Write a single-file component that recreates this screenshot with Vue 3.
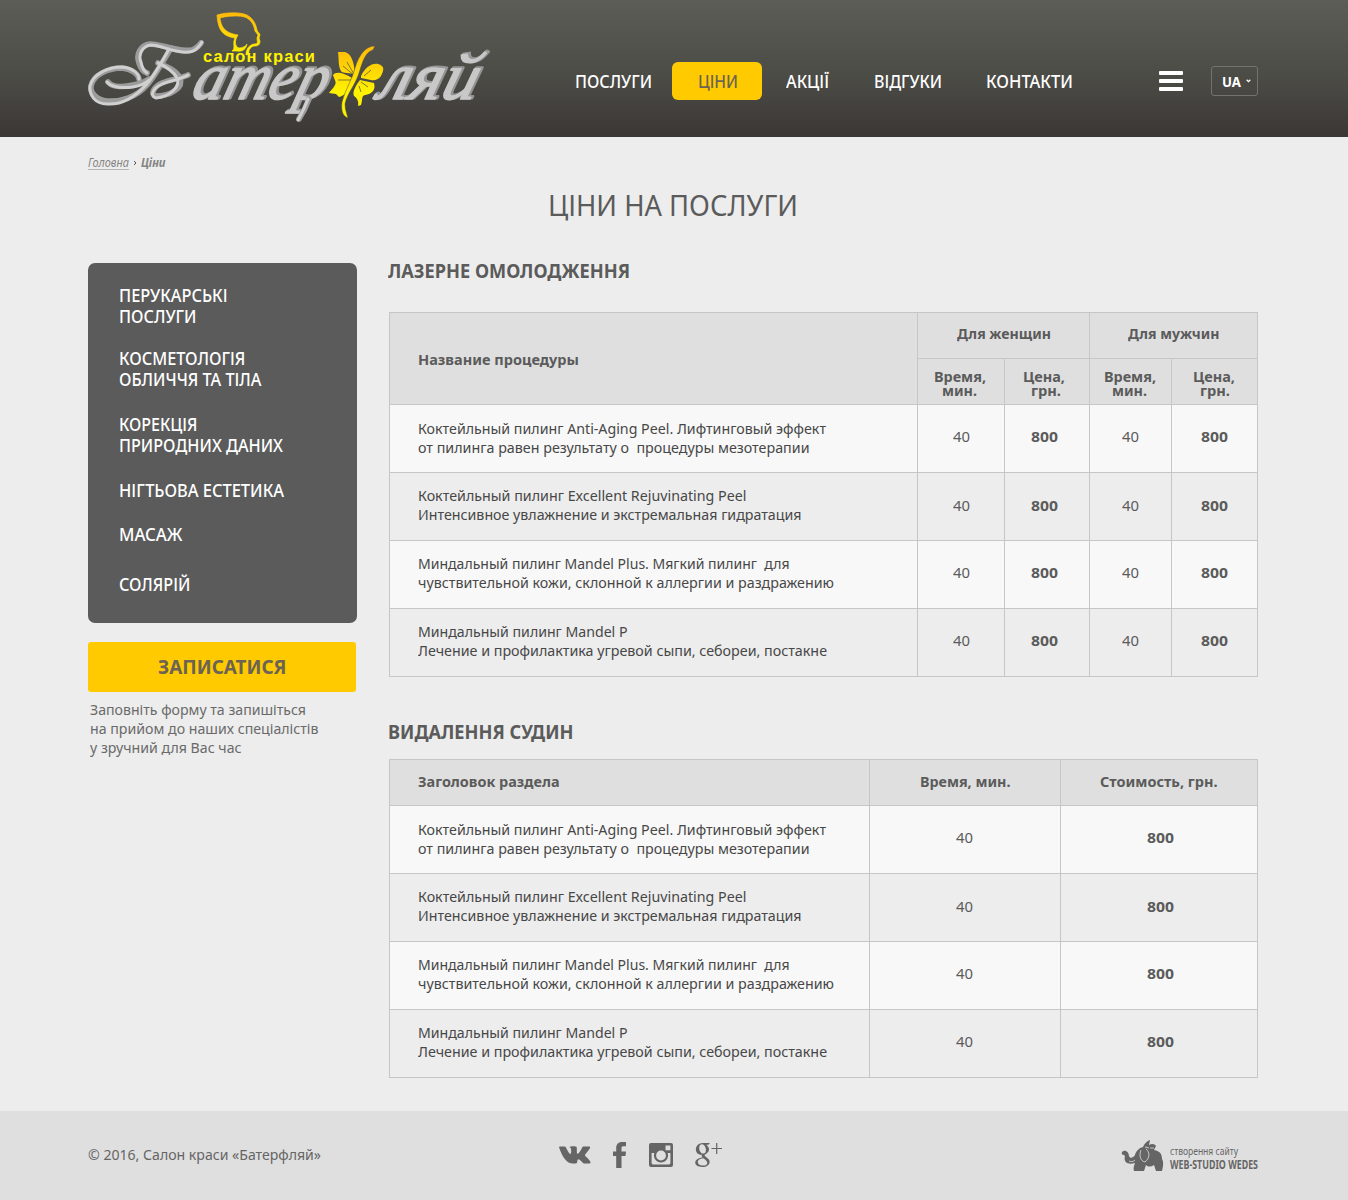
<script setup>
const nav = [
  { label: 'ПОСЛУГИ', w: 77 },
  { label: 'ЦІНИ', w: 40, active: true },
  { label: 'АКЦІЇ', w: 43 },
  { label: 'ВІДГУКИ', w: 68 },
  { label: 'КОНТАКТИ', w: 87 },
]

const categories = [
  { lines: [['ПЕРУКАРСЬКІ', 108.5], ['ПОСЛУГИ', 77.5]], space: 21 },
  { lines: [['КОСМЕТОЛОГІЯ', 126.5], ['ОБЛИЧЧЯ ТА ТІЛА', 142.5]], space: 24 },
  { lines: [['КОРЕКЦІЯ', 78.5], ['ПРИРОДНИХ ДАНИХ', 164]], space: 24 },
  { lines: [['НІГТЬОВА ЕСТЕТИКА', 165]], space: 23 },
  { lines: [['МАСАЖ', 63.5]], space: 29 },
  { lines: [['СОЛЯРІЙ', 71.5]], space: 0 },
]

const note = [
  ['Заповніть форму та запишіться', 216],
  ['на прийом до наших спеціалістів', 228.5],
  ['у зручний для Вас час', 151.5],
]

const procedures = [
  [['Коктейльный пилинг Anti-Aging Peel. Лифтинговый эффект', 408], ['от пилинга равен результату о \u00a0процедуры мезотерапии', 391.5]],
  [['Коктейльный пилинг Excellent Rejuvinating Peel', 328.5], ['Интенсивное увлажнение и экстремальная гидратация', 383.5]],
  [['Миндальный пилинг Mandel Plus. Мягкий пилинг \u00a0для', 371.5], ['чувствительной кожи, склонной к аллергии и раздражению', 416]],
  [['Миндальный пилинг Mandel P', 209.5], ['Лечение и профилактика угревой сыпи, себореи, постакне', 409]],
]

const vFit = {
  mounted(el, { value }) {
    const natural = el.getBoundingClientRect().width
    el.style.width = `${value}px`
    el.style.transform = `scaleX(${value / natural})`
  },
}
</script>

<template>
  <div class="page">
    <header class="header">
      <a class="logo">
        <svg width="410" height="128" viewBox="80 0 410 128">
          <defs>
            <linearGradient id="gold" x1="0" y1="0" x2="0" y2="1">
              <stop offset="0" stop-color="#ffb80a" />
              <stop offset="1" stop-color="#fff200" />
            </linearGradient>
            <linearGradient id="wing" gradientUnits="userSpaceOnUse" x1="0" y1="46" x2="0" y2="112">
              <stop offset="0" stop-color="#ffb80a" />
              <stop offset=".7" stop-color="#fff200" />
            </linearGradient>
          </defs>
          <g class="swash">
            <g class="back">
              <path d="M201 43 C195 51 190 51 182 50 C170 49 160 44 150 44 C140 45 136 55 139 63 C141 69 144 72 147 73" />
              <path d="M171 48 C164 60 156 74 148 84 C136 98 120 102 107 101 C97 100 90 93 91 86 C93 75 108 68 122 68 C132 69 138 74 139 79" />
              <path d="M108 82 C113 88 125 87 133 85 C139 84 145 82 149 79" />
              <path d="M158 63 C166 66 176 70 180 78 C184 88 170 96 156 96 C150 95 153 87 162 83 C172 79 182 78 188 75" />
            </g>
            <g class="front">
              <path d="M202 42 C196 52 190 53 182 52 C170 51 160 45 151 45 C142 46 138 55 141 62 C142 68 144 71 147 73" />
              <path d="M169 49 C162 62 154 76 146 85 C134 98 120 105 107 104 C95 104 89 95 90 86 C93 74 108 67 122 67 C132 68 139 73 139 79" />
              <path d="M107 82 C112 88 125 88 133 87 C139 86 145 84 149 80" />
              <path d="M158 63 C165 66 173 71 177 78 C181 88 168 97 156 98 C149 96 153 88 162 84 C172 80 182 79 188 75" />
            </g>
          </g>
          <g class="script">
            <text class="shade" transform="translate(192 98) skewX(-16)" textLength="134" lengthAdjust="spacingAndGlyphs">атер</text>
            <text class="shine" transform="translate(190 99) skewX(-16)" textLength="134" lengthAdjust="spacingAndGlyphs">атер</text>
            <text class="shade" transform="translate(378 98) skewX(-16)" textLength="98" lengthAdjust="spacingAndGlyphs">ляй</text>
            <text class="shine" transform="translate(376 99) skewX(-16)" textLength="98" lengthAdjust="spacingAndGlyphs">ляй</text>
            <path class="tail back" d="M309 99 C306 107 303 113 299 119" />
            <path class="tail front" d="M308 99 C305 107 302 113 298 120" />
          </g>
          <path stroke="url(#gold)" stroke-width=".7" fill="url(#gold)" d="M217 15 C227 12 240 12 247 15 C254 19 256 25 257 30 C258 33 260 33 260 35 L259 38 L260 41 C260 45 258 46 254 46 C250 47 248 51 249 54 L246 55 C246 49 249 45 254 44 C259 44 257 41 257 38 L258 35 L255 31 C253 20 247 16 237 16 C229 16 223 17 220 18 C221 26 224 33 238 35 C234 41 235 47 239 48 C243 48 246 46 247 44 C246 49 243 52 237 51 L232 51 C236 49 232 43 235 38 C221 36 218 28 217 15 Z" />
          <text class="tagline" x="203" y="62" textLength="112" lengthAdjust="spacing">салон краси</text>
          <g fill="url(#wing)">
            <path d="M338 52 L345 52 C351 54 354 60 355 75 C350 72 343 74 341 71 C338 66 339 58 338 52 Z" />
            <path d="M352 78 C344 73 336 71 333 75 C334 79 337 82 335 85 C333 89 330 91 329 93 L336 94 L339 97 C344 96 349 91 353 81 Z" />
            <path d="M361 76 C365 68 371 63 378 64 C385 66 384 70 381 76 C378 80 374 81 371 80 L361 78 Z" />
            <path d="M360 80 L374 83 C376 90 372 94 365 95 C361 96 363 99 361 105 L358 106 C359 101 357 98 354 96 C352 92 356 85 360 80 Z" />
          </g>
          <path class="wings" d="M347 62 L355 76 M343 66 L355 76 M338 80 L352 80 M364 76 L371 70 M361 82 L368 87 M359 86 L361 92" />
          <path fill="url(#wing)" stroke="#4b4a45" stroke-width=".5" d="M375 46 L373 50 C366 52 363 60 360 70 C356 85 347 93 345 104 C345 110 347 114 348 118 C342 116 341 109 342 102 C345 90 352 80 355 68 C359 54 366 46 375 46 Z" />
        </svg>
      </a>
      <nav class="nav">
        <a v-for="n in nav" :key="n.label" class="nav-link" :class="{ active: n.active }"><span v-fit="n.w" class="fit">{{ n.label }}</span></a>
      </nav>
      <div class="burger"><i></i><i></i><i></i></div>
      <div class="lang">
        <span v-fit="19" class="fit">UA</span>
        <svg width="5" height="4" viewBox="0 0 5 4"><path d="M.7 .8 L2.5 2.6 L4.3 .8" fill="none" stroke="#fff" stroke-width="1.3" /></svg>
      </div>
    </header>

    <main class="main">
      <div class="crumbs">
        <a><span v-fit="41" class="fit">Головна</span></a>
        <svg width="4" height="6" viewBox="0 0 4 6"><path d="M1 1 L3 3 L1 5" fill="none" stroke="#555" /></svg>
        <b><span v-fit="24.5" class="fit">Ціни</span></b>
      </div>
      <h1><span v-fit="250" class="fit">ЦІНИ НА ПОСЛУГИ</span></h1>

      <div class="columns">
        <aside class="aside">
          <ul class="menu">
            <li v-for="(c, i) in categories" :key="i" :style="{ marginBottom: c.space + 'px' }">
              <div v-for="l in c.lines" :key="l[0]"><span v-fit="l[1]" class="fit">{{ l[0] }}</span></div>
            </li>
          </ul>
          <button class="signup"><span v-fit="128.5" class="fit">ЗАПИСАТИСЯ</span></button>
          <div class="note">
            <div v-for="l in note" :key="l[0]"><span v-fit="l[1]" class="fit">{{ l[0] }}</span></div>
          </div>
        </aside>

        <div class="content">
          <h2><span v-fit="242" class="fit">ЛАЗЕРНЕ ОМОЛОДЖЕННЯ</span></h2>
          <div class="table five">
            <div class="th name tall"><span v-fit="161" class="fit">Название процедуры</span></div>
            <div class="th wide"><span v-fit="94" class="fit">Для женщин</span></div>
            <div class="th wide men"><span v-fit="91.5" class="fit">Для мужчин</span></div>
            <template v-for="g in 2" :key="g">
              <div class="th sub" :class="{ late: g === 2 }"><span v-fit="52" class="fit">Время,</span><span v-fit="35" class="fit">мин.</span></div>
              <div class="th sub price-head" :class="{ late: g === 2 }"><span v-fit="42" class="fit">Цена,</span><span v-fit="30" class="fit unit">грн.</span></div>
            </template>
            <template v-for="(p, i) in procedures" :key="i">
              <div class="td" :class="{ light: i % 2 === 0, first: i === 0 }">
                <div v-for="l in p" :key="l[0]"><span v-fit="l[1]" class="fit">{{ l[0] }}</span></div>
              </div>
              <template v-for="g in 2" :key="g">
                <div class="num" :class="{ light: i % 2 === 0, low: i === 1 }"><span v-fit="17" class="fit">40</span></div>
                <div class="num price" :class="{ light: i % 2 === 0, low: i === 1, left: g === 1 }"><span v-fit="27" class="fit">800</span></div>
              </template>
            </template>
          </div>

          <h2 class="second"><span v-fit="185.5" class="fit">ВИДАЛЕННЯ СУДИН</span></h2>
          <div class="table three">
            <div class="th name"><span v-fit="141.5" class="fit">Заголовок раздела</span></div>
            <div class="th"><span v-fit="90.5" class="fit">Время, мин.</span></div>
            <div class="th cost"><span v-fit="117.5" class="fit">Стоимость, грн.</span></div>
            <template v-for="(p, i) in procedures" :key="i">
              <div class="td" :class="{ light: i % 2 === 0, first: i === 0 }">
                <div v-for="l in p" :key="l[0]"><span v-fit="l[1]" class="fit">{{ l[0] }}</span></div>
              </div>
              <div class="num nudge" :class="{ light: i % 2 === 0, low: i === 1 }"><span v-fit="17" class="fit">40</span></div>
              <div class="num price right" :class="{ light: i % 2 === 0, low: i === 1 }"><span v-fit="27" class="fit">800</span></div>
            </template>
          </div>
        </div>
      </div>
    </main>

    <footer class="footer">
      <div class="copy"><span v-fit="233" class="fit">© 2016, Салон краси «Батерфляй»</span></div>
      <div class="social">
        <svg width="32" height="18" viewBox="0 0 32 18"><path d="M0 1.2 Q0 .5 1 .5 H5.5 Q6.5 .5 7 1.6 C8.4 4.9 10 7.6 11.3 8 C12.4 8.2 12.4 3.2 11.8 2.2 C11.5 1.5 10.4 1.4 10.4 1.1 C11.2 0 17 -.2 17.6 1 C18.2 2.2 17.3 7.2 18.4 7.8 C19.7 7.8 22 4 23 1.7 Q23.4 .5 24.5 .5 H30 C32.9 .5 29.9 4 26.4 8.2 C25.6 9.3 26 9.8 27.4 11.1 C31.2 14.8 33.2 17.5 29.8 17.5 H25.6 C23.7 17.5 21.4 13.6 19.4 13.2 C17.8 13.2 18.8 17.5 17 17.5 H14 C7.5 17.5 3.4 11 0 1.2 Z" /></svg>
        <svg width="14" height="26" viewBox="0 0 14 26"><path d="M3.2 26 V14 H0 V9.5 H3.2 V6 C3.2 2.2 5.4 0 9 0 H13 V4.3 H10.2 C9 4.3 8.5 5 8.5 6.2 V9.5 H13 L12.5 14 H8.5 V26 Z" /></svg>
        <svg width="26" height="26" viewBox="0 0 26 26"><path fill-rule="evenodd" d="M3 1 H23 Q25 1 25 3 V23 Q25 25 23 25 H3 Q1 25 1 23 V3 Q1 1 3 1 Z M17.5 3.6 V8.2 H22.4 V3.6 Z M3.6 11 V21 Q3.6 22.4 5 22.4 H21 Q22.4 22.4 22.4 21 V11 H19.7 A7.1 7.1 0 1 1 6.3 11 Z M13 8.6 A4.9 4.9 0 1 0 13 18.4 A4.9 4.9 0 1 0 13 8.6 Z" /></svg>
        <svg class="gplus" width="28" height="30" viewBox="0 0 28 30"><path fill-rule="evenodd" d="M15 2 L13.4 3.7 H11.3 C15.5 7 14.5 11 10.6 13.2 C8.4 14.4 10 15.3 12 16.7 C17.3 20.4 14 26 7.3 26 C2 26 -1 23 .7 19.8 C1.9 17.5 4.8 16.6 7.5 16.4 C6.6 15.5 6.5 14.7 6.9 13.8 C-1.6 14.4 -1 2 8 2 Z M7 3.2 C2.5 3.2 3.8 12.6 8.4 12.6 C12.8 12.4 11 3.2 7 3.2 Z M8.3 17.3 C1 17.5 1 24.5 7.8 24.6 C13 24.6 14.2 20.8 8.3 17.3 Z" /><path d="M16.5 7.5 H27 M21.7 2 V13" fill="none" stroke="#656565" stroke-width="1.2" /></svg>
      </div>
      <svg class="studio" width="142" height="38" viewBox="0 0 142 38">
        <path d="M1 13 C4 10 8 13 8 17 C9 20 12 19 14 16 C15 12 18 9 22 8 C23 5 26 2 29 1 L28 6 C31 4 34 5 35 7 L33 11 C39 12 41 15 41 20 C43 23 42 28 41 32 H35 L33 26 C30 28 27 28 25 26 L23 32 H13 C12 29 13 27 14 24 C8 26 2 24 4 17 C3 15 0 17 1 13 Z" />
        <path d="M20 11 C18 16 19 22 24 23 C29 19 29 13 25 10 M14 21 C12 23 10 23 8 22 M24 8 L28 9 M29 9 L33 9" fill="none" stroke="#dfdfdf" stroke-width=".8" />
        <text class="thin" x="49" y="16" textLength="68" lengthAdjust="spacingAndGlyphs">створення сайту</text>
        <text class="bold" x="49" y="30" textLength="88" lengthAdjust="spacingAndGlyphs">WEB-STUDIO WEDES</text>
      </svg>
    </footer>
  </div>
</template>

<style>
body {
  margin: 0;
  background: #ededed;
}
</style>

<style scoped>
.page {
  box-sizing: border-box;
  width: 1348px;
  height: 1200px;
  display: flex;
  flex-direction: column;
  background: #ededed;
  color: #5b5b5b;
  font-family: 'Noto Sans', 'Open Sans', sans-serif;
}
.fit {
  display: inline-block;
  white-space: nowrap;
  text-align: left;
  transform-origin: 0 50%;
}
.header {
  height: 137px;
  flex: none;
  display: flex;
  align-items: flex-start;
  background: linear-gradient(#5d5d57, #4c4c47 55%, #3b3734);
}
.logo {
  margin-left: 80px;
  width: 410px;
}
.logo svg {
  display: block;
}
.swash path,
.tail {
  fill: none;
  stroke-linecap: round;
}
.swash .back,
.tail.back {
  stroke: #9c9c9c;
  stroke-width: 5.6;
}
.swash .front,
.tail.front {
  stroke: #d0d0d0;
  stroke-width: 3;
}
.script {
  font: italic 66px 'Liberation Serif', serif;
  stroke-linejoin: round;
}
.shade {
  fill: #959595;
  stroke: #959595;
  stroke-width: 3;
}
.shine {
  fill: #c8c8c8;
  stroke: #c8c8c8;
  stroke-width: 1.4;
}
.tagline {
  font: bold 16.5px 'Liberation Sans', sans-serif;
  fill: #fff200;
}
.wings {
  fill: none;
  stroke: #4b4a45;
  stroke-width: 0.7;
}
.nav {
  display: flex;
  margin: 62px 0 0 85px;
  width: 584px;
}
.nav-link {
  height: 38px;
  line-height: 39px;
  font-size: 17.3px;
  font-weight: 500;
  color: #fff;
  margin-right: 44.5px;
}
.nav-link:first-child {
  margin-right: 20px;
}
.nav-link.active {
  box-sizing: border-box;
  width: 90px;
  padding-left: 26px;
  margin-right: 24px;
  border-radius: 6px;
  background: #ffcb00;
  color: #6b6353;
}
.burger {
  width: 24px;
  height: 20px;
  margin-top: 71px;
  display: flex;
  flex-direction: column;
  justify-content: space-between;
}
.burger i {
  height: 4px;
  border-radius: 1px;
  background: #fff;
}
.lang {
  box-sizing: border-box;
  width: 47px;
  height: 30px;
  margin: 66px 0 0 28px;
  padding: 1px 0 0 10px;
  display: flex;
  align-items: center;
  gap: 5px;
  border: 1px solid #73736e;
  border-radius: 3px;
  color: #fff;
  font-size: 14px;
  font-weight: 700;
}
.lang svg {
  margin-top: -1px;
}
.main {
  height: 974px;
  padding: 0 90px 0 88px;
}
.crumbs {
  display: flex;
  align-items: center;
  gap: 4px;
  height: 17px;
  padding-top: 17px;
  font-size: 11.8px;
  line-height: 13px;
  font-style: italic;
  color: #858585;
}
.crumbs a {
  border-bottom: 1px solid #b5b5b5;
}
h1 {
  margin: 12px 0 0;
  padding-right: 1px;
  height: 44px;
  line-height: 44px;
  text-align: center;
  font-size: 29px;
  font-weight: 400;
}
.columns {
  display: flex;
  align-items: flex-start;
  gap: 32px;
  margin-top: 36px;
}
.aside {
  width: 269px;
}
.menu {
  box-sizing: border-box;
  height: 360px;
  margin: 0;
  padding: 22px 0 0 31px;
  list-style: none;
  border-radius: 7px;
  background: #5b5b5b;
  color: #fff;
  font-size: 17.3px;
  font-weight: 500;
  line-height: 21px;
}
.signup {
  display: block;
  width: 268px;
  height: 50px;
  margin: 19px 0 8px;
  padding: 0 0 1px 1px;
  border: 0;
  border-radius: 3px;
  background: #ffcb00;
  color: #6b6353;
  font: 700 19.5px 'Noto Sans', sans-serif;
}
.note {
  padding-left: 2.4px;
  font-size: 14.9px;
  line-height: 19px;
  color: #6a6a6a;
}
.content {
  width: 869px;
}
h2 {
  margin: -4px 0 0 -1.5px;
  height: 24px;
  line-height: 24px;
  font-size: 19.5px;
  font-weight: 700;
}
h2.second {
  margin-top: 43px;
  margin-left: -1px;
}
.table {
  box-sizing: border-box;
  width: 869px;
  display: grid;
  gap: 1px;
  padding: 1px;
  background: #c6c6c6;
  font-size: 14.9px;
}
.five {
  margin-top: 29px;
  grid-template-columns: 527px 86px 84px 81px 85px;
  grid-template-rows: 45px 45px repeat(4, 67px);
}
.three {
  margin-top: 15px;
  grid-template-columns: 479px 190px 196px;
  grid-template-rows: 45px repeat(4, 67px);
}
.th {
  display: flex;
  align-items: center;
  justify-content: center;
  padding-bottom: 3px;
  background: #dfdfdf;
  font-size: 15px;
  font-weight: 700;
}
.th.name {
  justify-content: flex-start;
  padding-left: 27.6px;
}
.th.tall {
  grid-row: span 2;
  padding: 1px 0 0 27.6px;
}
.th.wide {
  grid-column: span 2;
  padding: 0 0 5px 1px;
}
.th.wide.men {
  padding-left: 0;
}
.th.cost {
  padding-right: 1px;
}
.th.sub {
  flex-direction: column;
  line-height: 14px;
  padding: 2px 3px 0 0;
}
.th.sub.price-head {
  padding-right: 6px;
}
.th.sub.late {
  padding-right: 2px;
}
.unit {
  margin-left: 3px;
}
.td {
  padding: 13px 0 0 27.6px;
  line-height: 19px;
  background: #ededed;
  color: #474747;
}
.td.first {
  padding-top: 14px;
}
.num {
  padding-top: 21px;
  line-height: 20px;
  text-align: center;
  background: #ededed;
}
.num.low {
  padding-top: 22px;
}
.num.left {
  padding-right: 5px;
}
.num.nudge {
  padding-right: 2px;
}
.num.right {
  padding-left: 3px;
}
.price {
  font-size: 15px;
  font-weight: 700;
}
.light {
  background: #f8f8f8;
}
.footer {
  height: 89px;
  flex: none;
  display: flex;
  align-items: flex-start;
  padding-left: 88px;
  background: #dfdfdf;
  color: #656565;
  fill: #656565;
}
.copy {
  width: 471px;
  margin-top: 33px;
  line-height: 20px;
  font-size: 14.9px;
}
.social {
  display: flex;
  align-items: center;
  width: 562px;
  height: 28px;
  margin-top: 30px;
}
.social svg {
  margin-right: 21px;
}
.social svg:first-child {
  margin-right: 22px;
}
.gplus {
  margin-top: 2px;
}
.studio {
  margin-top: 28px;
}
.thin {
  font-size: 11.5px;
}
.bold {
  font-size: 12px;
  font-weight: 700;
}
</style>
